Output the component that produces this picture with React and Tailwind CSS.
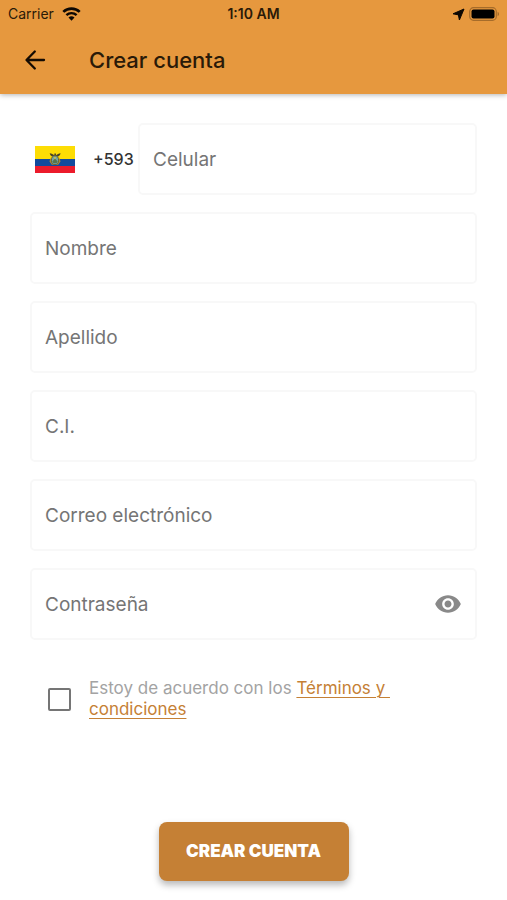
import { useState } from "react";

const fields = [
  { id: "nombre", label: "Nombre", type: "text" },
  { id: "apellido", label: "Apellido", type: "text" },
  { id: "ci", label: "C.I.", type: "text" },
  { id: "correo", label: "Correo electrónico", type: "email" },
];

const inputClass =
  "block w-full h-[72px] rounded-[5px] border-2 border-[#f8f8f8] bg-white px-[13px] text-[19px] text-[#222222] placeholder:text-[#757575] placeholder:opacity-100 outline-none focus:border-[#e6983e]";

function StatusBar() {
  return (
    <div className="grid grid-cols-3 items-center h-7 px-2 text-sm text-[#2a1a08]">
      <div className="flex items-center gap-2">
        <span>Carrier</span>
        <svg width="19" height="14" viewBox="0 0 19 14" fill="none" stroke="#0d0803">
          <path d="M1.3 4.9a11.7 11.7 0 0 1 16.4 0" strokeWidth="2.7" />
          <path d="M4.4 8.2a7.2 7.2 0 0 1 10.2 0" strokeWidth="2.4" />
          <path d="M9.5 13.8 6.5 10.6a4.3 4.3 0 0 1 6 0Z" fill="#0d0803" stroke="none" />
        </svg>
      </div>
      <span className="text-center font-semibold">1:10 AM</span>
      <div className="flex items-center justify-end gap-1">
        <svg width="13" height="13" viewBox="0 0 13 13" fill="#0d0803">
          <path d="M12 1 7.4 12 6.4 6.9 1 5.8Z" stroke="#0d0803" strokeWidth="1" strokeLinejoin="round" />
        </svg>
        <svg width="30" height="14" viewBox="0 0 30 14">
          <rect x=".7" y=".7" width="26.6" height="12.6" rx="3.8" fill="none" stroke="#a66c2a" strokeWidth="1.2" />
          <rect x="2.5" y="2.5" width="23" height="9" rx="2" fill="#000" />
          <path d="M28.6 4.8a2.4 2.4 0 0 1 0 4.4Z" fill="#a66c2a" />
        </svg>
      </div>
    </div>
  );
}

function EcuadorFlag() {
  return (
    <svg width="40" height="27" viewBox="0 0 40 27" role="img" aria-label="Ecuador">
      <rect width="40" height="14" fill="#fddd04" />
      <rect y="13" width="40" height="7" fill="#134a9c" />
      <rect y="20" width="40" height="7" fill="#ec1b2b" />
      {/* Coat of arms */}
      <path d="M14.7 7.2c2 .2 3.4.9 4.4 2.1l.6-2 1 .1.5 1.9c1-1.2 2.4-1.9 4.4-2.1-.5 2.2-1.8 3.4-3.8 3.5h-3.4c-2-.1-3.2-1.3-3.7-3.5Z" fill="#4b4426" />
      <path d="M15.5 11.8 17.3 17l2.7 2 2.7-2 1.8-5.2 1 3.8-2.3 3.2h-6.4l-2.3-3.2Z" fill="#aa8837" />
      <ellipse cx="20" cy="14.2" rx="3.6" ry="4.4" fill="#71a6a6" stroke="#6e642e" strokeWidth="1" />
      <path d="M17.3 15.6 20 12.6l2.6 3-1 1.7h-3.2Z" fill="#57744c" />
      <circle cx="20" cy="11.9" r=".9" fill="#e4c33e" />
    </svg>
  );
}

export default function App() {
  const [showPassword, setShowPassword] = useState(false);

  return (
    <div className="min-h-screen bg-white font-['Inter','Liberation_Sans',sans-serif]">
      <header className="bg-[#e6983e] shadow-[0_1px_5px_rgba(0,0,0,0.3)]">
        <StatusBar />
        <div className="flex items-center h-[66px] px-6 pb-0.5 gap-[42px]">
          <button type="button" aria-label="Volver">
            <svg
              width="23"
              height="22"
              viewBox="0 0 23 22"
              fill="none"
              stroke="#140b02"
              strokeWidth="2.3"
              strokeLinecap="round"
              strokeLinejoin="round"
            >
              <path d="M20 11H3M10.8 2.5 2.5 11l8.3 8.5" />
            </svg>
          </button>
          <h1 className="text-[22px] leading-7 font-medium text-[#2a1a08]">Crear cuenta</h1>
        </div>
      </header>

      <form className="px-[30px] pt-[29px]" onSubmit={(e) => e.preventDefault()}>
        <div className="flex flex-col gap-[17px]">
          <div className="flex items-center">
            <button type="button" className="flex shrink-0 items-center w-[108px] pl-[5px] gap-[18px]">
              <EcuadorFlag />
              <span className="text-base font-medium text-[#333333]">+593</span>
            </button>
            <input
              type="tel"
              aria-label="Celular"
              placeholder="Celular"
              className={`${inputClass} min-w-0 flex-1`}
            />
          </div>

          {fields.map((field) => (
            <input
              key={field.id}
              type={field.type}
              aria-label={field.label}
              placeholder={field.label}
              className={inputClass}
            />
          ))}

          <div className="flex items-center h-[72px] rounded-[5px] border-2 border-[#f8f8f8] px-[13px] focus-within:border-[#e6983e]">
            <input
              type={showPassword ? "text" : "password"}
              aria-label="Contraseña"
              placeholder="Contraseña"
              className="min-w-0 flex-1 h-full bg-transparent text-[19px] text-[#222222] placeholder:text-[#757575] placeholder:opacity-100 outline-none"
            />
            <button
              type="button"
              aria-label="Mostrar contraseña"
              onClick={() => setShowPassword(!showPassword)}
            >
              <svg width="28" height="28" viewBox="0 0 24 24" fill="#898989">
                <path d="M12 4.5C7 4.5 2.73 7.61 1 12c1.73 4.39 6 7.5 11 7.5s9.27-3.11 11-7.5c-1.73-4.39-6-7.5-11-7.5ZM12 17c-2.76 0-5-2.24-5-5s2.24-5 5-5 5 2.24 5 5-2.24 5-5 5Zm0-8c-1.66 0-3 1.34-3 3s1.34 3 3 3 3-1.34 3-3-1.34-3-3-3Z" />
              </svg>
            </button>
          </div>
        </div>

        <div className="flex items-center mt-[38px] pl-[18px] gap-[18px]">
          <input
            id="terminos"
            type="checkbox"
            className="size-[23px] shrink-0 appearance-none rounded-[2px] border-2 border-[#757575] checked:border-[#c58035] checked:bg-[#c58035]"
          />
          <label htmlFor="terminos" className="max-w-[320px] text-[17px] leading-[21px] text-[#a3a3a3]">
            Estoy de acuerdo con los{" "}
            <a href="#terminos" className="text-[#c58035] underline underline-offset-3 decoration-1">
              Términos y&nbsp;
              <br />
              condiciones
            </a>
          </label>
        </div>

        <div className="flex justify-center pt-[102px] pb-5">
          <button
            type="submit"
            className="h-[59px] px-6 min-w-[190px] rounded-lg bg-[#c58035] text-[17px] font-black text-white shadow-[0_4px_7px_rgba(0,0,0,0.28)]"
          >
            CREAR CUENTA
          </button>
        </div>
      </form>
    </div>
  );
}
